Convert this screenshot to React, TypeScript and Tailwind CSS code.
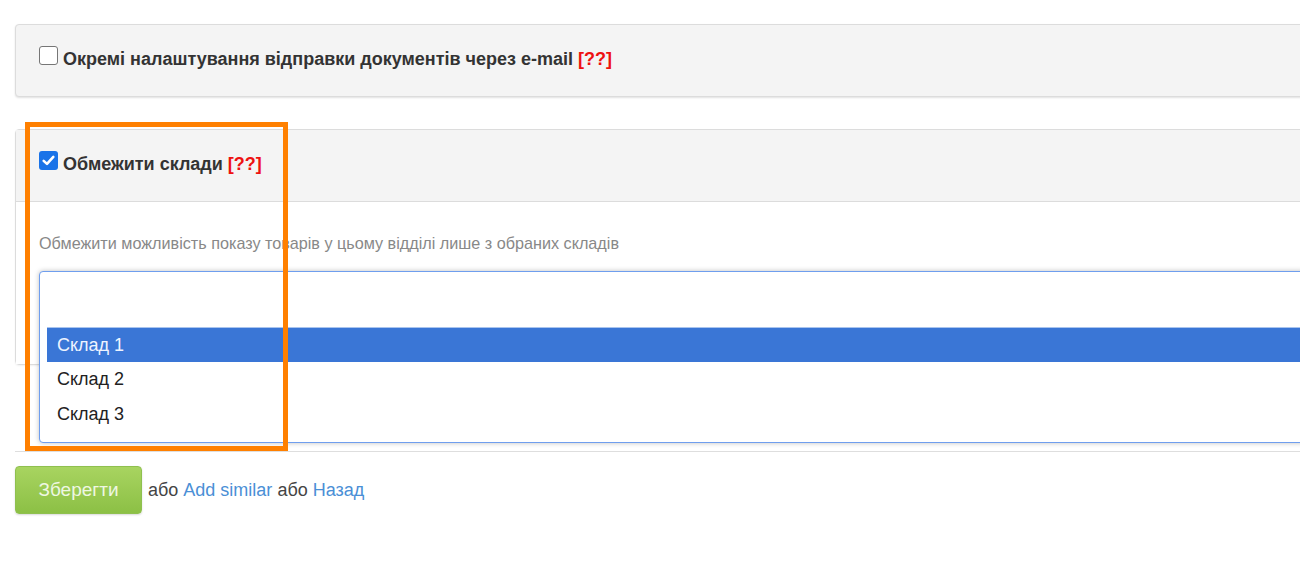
import React from "react";

function Box({ checked }: { checked?: boolean }) {
  if (checked) {
    return (
      <span className="flex h-[19px] w-[19px] shrink-0 items-center justify-center rounded-[3px] bg-[#1a73e8]">
        <svg width="15" height="15" viewBox="0 0 14 14" fill="none">
          <path d="M2.5 7.3 L5.6 10.2 L11.5 3.6" stroke="#fff" strokeWidth="2.4" strokeLinecap="round" strokeLinejoin="round" />
        </svg>
      </span>
    );
  }
  return <span className="block h-[19px] w-[19px] shrink-0 rounded-[3px] border-[1.5px] border-[#767676] bg-white" />;
}

export default function App() {
  return (
    <div className="relative h-[565px] w-[1300px] overflow-hidden bg-white font-['Liberation_Sans',Arial,sans-serif] text-[#333]">
      <div className="w-[1330px] pl-[15px] pt-[24px]">
        <div className="flex h-[73px] items-center rounded-l-[4px] border border-[#dcdcdc] bg-[#f4f4f4] pl-[23px] shadow-[0_1px_2px_rgba(0,0,0,0.12)]">
          <div className="-mt-[3px] flex items-start gap-[5px]">
            <span className="mt-[-2px]"><Box /></span>
            <span className="text-[18px] font-bold leading-[22px]">
              Окремі налаштування відправки документів через e-mail{" "}
              <span className="text-[#ee1111]">[??]</span>
            </span>
          </div>
        </div>

        <div className="mt-[32px] rounded-l-[4px] border border-[#dcdcdc] shadow-[0_1px_2px_rgba(0,0,0,0.06)]">
          <div className="flex h-[72px] items-center border-b border-[#dcdcdc] bg-[#f4f4f4] pl-[23px]">
            <div className="-mt-[3px] flex items-start gap-[5px]">
              <span className="mt-[-2px]"><Box checked /></span>
              <span className="text-[18px] font-bold leading-[22px]">
                Обмежити склади <span className="text-[#ee1111]">[??]</span>
              </span>
            </div>
          </div>
          <div className="bg-white pl-[23px] pb-[37px] pt-[31px]">
            <p className="text-[16.2px] leading-[20px] text-[#888]">
              Обмежити можливість показу товарів у цьому відділі лише з обраних складів
            </p>
            <div className="relative mt-[18px] h-[56px]">
              <div className="absolute left-0 right-0 top-0 z-10 h-[172px] rounded-[4px] border border-[#6f9eee] bg-white shadow-[0_0_5px_rgba(0,0,0,0.25)]">
                <ul className="mt-[55px] px-[7px] text-[18px] leading-[35px] text-[#222]">
                  <li className="border-t border-[#a9c4ee] bg-[#3a76d6] pl-[10px] leading-[34px] text-[#eef3ff]">Склад 1</li>
                  <li className="pl-[10px]">Склад 2</li>
                  <li className="pl-[10px]">Склад 3</li>
                </ul>
              </div>
            </div>
          </div>
        </div>

        <div className="mt-[86px] h-px bg-[#dedede]" />

        <div className="mt-[14px] flex items-center">
          <button className="h-[48px] w-[127px] rounded-[4px] border border-[#8fc04f] bg-gradient-to-b from-[#a8d460] to-[#8cc045] text-[19px] text-[#eef7e2] shadow-[0_1px_2px_rgba(0,0,0,0.15)]">
            Зберегти
          </button>
          <span className="ml-[6px] text-[18px] text-[#444]">
            або <span className="text-[#4a8fd6]">Add similar</span> або <span className="text-[#4a8fd6]">Назад</span>
          </span>
        </div>
      </div>

      <div className="pointer-events-none absolute left-[25px] top-[122px] z-20 h-[329px] w-[263px] border-[5px] border-[#ff8000]" />
    </div>
  );
}
